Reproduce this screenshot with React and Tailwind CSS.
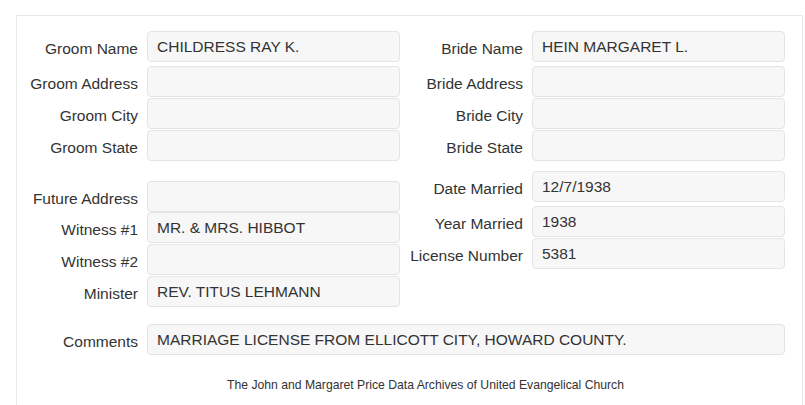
import React from "react";

const LEFT = [
  { label: "Groom Name", value: "CHILDRESS RAY K.", mt: "mt-0" },
  { label: "Groom Address", value: "", mt: "mt-[4px]" },
  { label: "Groom City", value: "", mt: "mt-[1px]" },
  { label: "Groom State", value: "", mt: "mt-[1px]" },
  { label: "Future Address", value: "", mt: "mt-[20px]" },
  { label: "Witness #1", value: "MR. & MRS. HIBBOT", mt: "mt-0" },
  { label: "Witness #2", value: "", mt: "mt-[1px]" },
  { label: "Minister", value: "REV. TITUS LEHMANN", mt: "mt-[1px]" },
];

const RIGHT = [
  { label: "Bride Name", value: "HEIN MARGARET L.", mt: "mt-0" },
  { label: "Bride Address", value: "", mt: "mt-[4px]" },
  { label: "Bride City", value: "", mt: "mt-[1px]" },
  { label: "Bride State", value: "", mt: "mt-[1px]" },
  { label: "Date Married", value: "12/7/1938", mt: "mt-[10px]" },
  { label: "Year Married", value: "1938", mt: "mt-[4px]" },
  { label: "License Number", value: "5381", mt: "mt-[1px]" },
];

function Box({ value, width }) {
  return (
    <div
      className={`${width} h-[31px] flex items-center pl-[9px] pt-[1px] bg-[#f7f7f7] border border-[#e4e4e4] rounded-[4px] text-[15.5px] text-[#333] whitespace-nowrap`}
    >
      {value}
    </div>
  );
}

function Field({ label, value, mt, labelW }) {
  return (
    <div className={`flex items-center ${mt}`}>
      <div className={`${labelW} text-right pt-[4px] text-[15.5px] text-[#333] whitespace-nowrap`}>{label}</div>
      <div className="ml-[9px]">
        <Box value={value} width="w-[253px]" />
      </div>
    </div>
  );
}

export default function App() {
  return (
    <div className="min-h-screen bg-white pt-[15px] pl-[16px] overflow-hidden font-['Liberation_Sans',Arial,sans-serif]">
      <div className="w-[787px] h-[400px] border border-b-0 border-[#e8e8e8] pt-[15px]">
        <div className="flex">
          {/* groom / ceremony column */}
          <div className="flex flex-col w-[383px]">
            {LEFT.map((f) => (
              <Field key={f.label} {...f} labelW="w-[121px]" />
            ))}
          </div>
          {/* bride / license column */}
          <div className="flex flex-col">
            {RIGHT.map((f) => (
              <Field key={f.label} {...f} labelW="w-[123px]" />
            ))}
          </div>
        </div>

        <div className="flex items-center mt-[17px]">
          <div className="w-[121px] text-right pt-[4px] text-[15.5px] text-[#333]">Comments</div>
          <div className="ml-[9px]">
            <Box value="MARRIAGE LICENSE FROM ELLICOTT CITY, HOWARD COUNTY." width="w-[638px]" />
          </div>
        </div>

        <p className="mt-[21px] pl-[32px] text-center text-[12.2px] text-[#333]">
          The John and Margaret Price Data Archives of United Evangelical Church
        </p>
      </div>
    </div>
  );
}
